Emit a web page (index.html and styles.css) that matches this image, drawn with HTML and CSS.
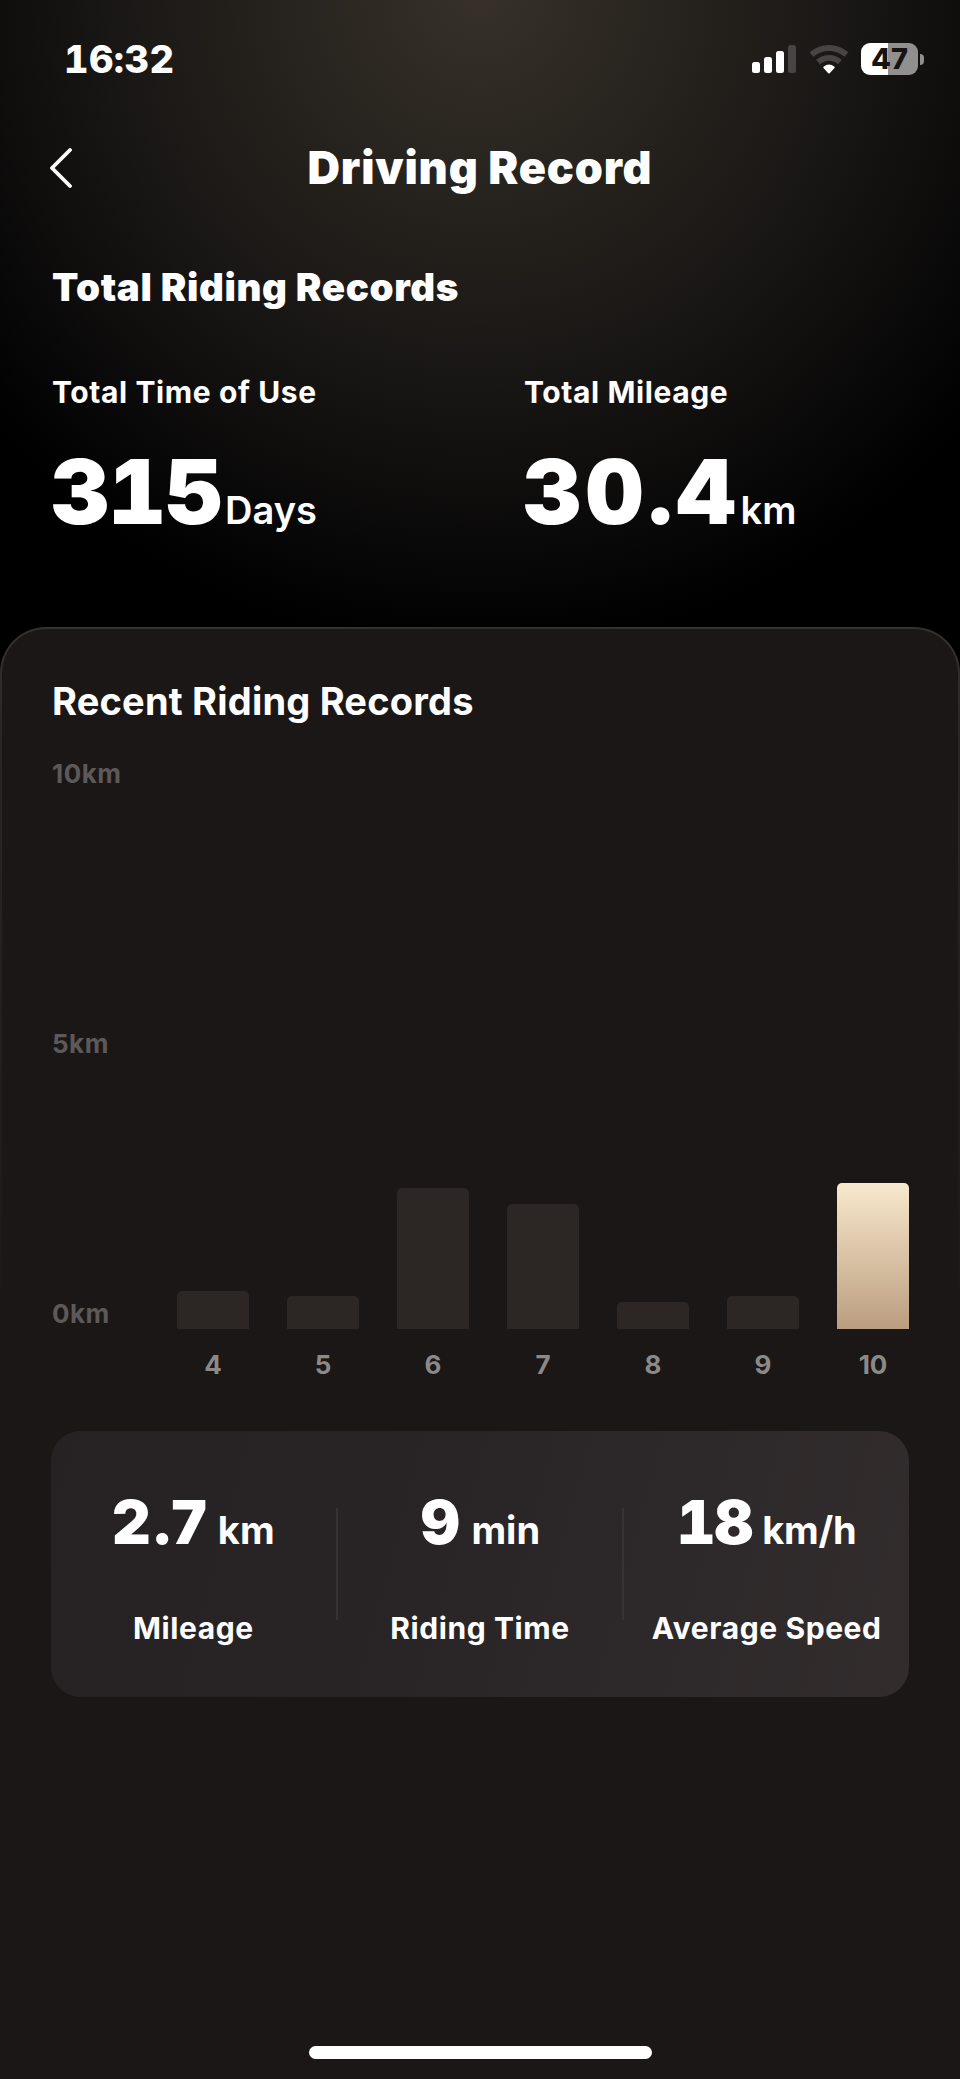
FILE: index.html
```html
<!DOCTYPE html>
<html lang="en">
<head>
<meta charset="utf-8">
<title>Driving Record</title>
<link rel="stylesheet" href="styles.css">
</head>
<body>
<div class="screen">
  <div class="status-bar">
    <span class="time">16:32</span>
    <div class="status-icons">
      <svg class="signal" width="44" height="28" viewBox="0 0 44 28">
        <rect x="0" y="17" width="8" height="11" rx="2.5" fill="#fff"/>
        <rect x="12" y="12" width="8" height="16" rx="2.5" fill="#fff"/>
        <rect x="24" y="6" width="8" height="22" rx="2.5" fill="#fff"/>
        <rect x="36" y="0" width="8" height="28" rx="2.5" fill="#474443"/>
      </svg>
      <svg class="wifi" width="40" height="29" viewBox="0 0 40 29">
        <path d="M2.500 9.6Q10.500 3 20 3T37.500 9.600" fill="none" stroke="#474443" stroke-width="5.8"/>
        <path d="M9 17Q14 12.800 20 12.800T31 17" fill="none" stroke="#474443" stroke-width="5.800"/>
        <path d="M14.500 21.700Q20 17.300 25.500 21.700Q26 22.300 25.500 22.900L20.700 28.200Q20 28.900 19.300 28.200L14.500 22.900Q14 22.300 14.500 21.700Z" fill="#fff"/>
      </svg>
      <div class="battery"><span class="battery-body">47</span><span class="battery-cap"></span></div>
    </div>
  </div>

  <header class="nav">
    <svg class="back" width="24" height="42" viewBox="0 0 24 42">
      <path d="M22 3L4 21L22 39" fill="none" stroke="#fff" stroke-width="3.800" stroke-linecap="round" stroke-linejoin="round"/>
    </svg>
    <h1 class="nav-title">Driving Record</h1>
  </header>

  <section class="totals">
    <h2 class="totals-title">Total Riding Records</h2>
    <div class="totals-grid">
      <div>
        <div class="label">Total Time of Use</div>
        <div class="total-value">315<span class="unit">Days</span></div>
      </div>
      <div>
        <div class="label">Total Mileage</div>
        <div class="total-value decimal">30.4<span class="unit">km</span></div>
      </div>
    </div>
  </section>

  <section class="panel">
    <h2 class="panel-title">Recent Riding Records</h2>
    <div class="chart">
      <div class="y-axis"><span>10km</span><span>5km</span><span>0km</span></div>
      <div class="bars">
        <div class="col"><div class="bar" style="height:38px"></div><span class="day">4</span></div>
        <div class="col"><div class="bar" style="height:33px"></div><span class="day">5</span></div>
        <div class="col"><div class="bar" style="height:141px"></div><span class="day">6</span></div>
        <div class="col"><div class="bar" style="height:125px"></div><span class="day">7</span></div>
        <div class="col"><div class="bar" style="height:27px"></div><span class="day">8</span></div>
        <div class="col"><div class="bar" style="height:33px"></div><span class="day">9</span></div>
        <div class="col"><div class="bar active" style="height:146px"></div><span class="day">10</span></div>
      </div>
    </div>
    <div class="summary">
      <div class="metric"><div class="metric-value">2.7<span class="unit">km</span></div><div class="label">Mileage</div></div>
      <div class="divider"></div>
      <div class="metric"><div class="metric-value">9<span class="unit">min</span></div><div class="label">Riding Time</div></div>
      <div class="divider"></div>
      <div class="metric"><div class="metric-value tabular">18<span class="unit">km/h</span></div><div class="label">Average Speed</div></div>
    </div>
    <div class="home-indicator"></div>
  </section>
</div>
</body>
</html>
```
FILE: styles.css
```css
* { box-sizing: border-box; }

body {
  margin: 0;
  background: #000;
  color: #fff;
  font-family: Inter, "Liberation Sans", sans-serif;
}

.screen {
  display: flex;
  flex-direction: column;
  width: 960px;
  height: 2079px;
  background: radial-gradient(ellipse 640px 660px at 480px -10px, #37312a 0%, #27231e 30%, #191715 58%, #0a0909 84%, #000 100%);
}

.status-bar {
  display: flex;
  justify-content: space-between;
  align-items: center;
  height: 118px;
  padding: 0 36px 0 64px;
}

.time {
  font-size: 38px;
  font-weight: 780;
  font-variant-numeric: tabular-nums;
  line-height: 46px;
  letter-spacing: 0.4px;
}

.status-icons { display: flex; align-items: center; }
.wifi { margin: 0 12px 0 13px; }
.battery { display: flex; align-items: center; }

.battery-body {
  width: 57px;
  height: 32px;
  border-radius: 9px;
  background: linear-gradient(90deg, #fff 27px, #92908e 27px);
  color: #161413;
  font-size: 29px;
  font-weight: 800;
  line-height: 32px;
  text-align: center;
}

.battery-cap {
  width: 4px;
  height: 11px;
  margin-left: 2px;
  border-radius: 0 5px 5px 0;
  background: #92908e;
}

.nav {
  display: grid;
  grid-template-columns: 48px 1fr 48px;
  align-items: center;
  height: 100px;
  padding: 0 48px;
}

.nav-title {
  margin: 0;
  font-size: 45px;
  font-weight: 900;
  line-height: 56px;
  letter-spacing: 0.8px;
  text-align: center;
}

.totals { height: 409px; padding: 45px 52px 0; }

.totals-title {
  margin: 0 0 61px;
  font-size: 38.5px;
  font-weight: 900;
  line-height: 48px;
  letter-spacing: 0.6px;
}

.totals-grid { display: grid; grid-template-columns: 472px 1fr; }

.label { font-size: 30px; font-weight: 650; line-height: 40px; letter-spacing: 0.6px; white-space: nowrap; }

.total-value {
  margin-top: 35px;
  margin-left: -1px;
  font-size: 90px;
  font-weight: 900;
  font-variant-numeric: tabular-nums;
  line-height: 90px;
  letter-spacing: -1px;
}

.total-value.decimal { letter-spacing: 4.6px; }

.unit { font-size: 38px; font-weight: 620; line-height: 1; letter-spacing: 0; }
.total-value .unit { margin-left: 3px; }
.total-value.decimal .unit { margin-left: 1px; }

.panel {
  display: flex;
  flex-direction: column;
  flex: 1;
  padding: 47px 50px 20px;
  border: 2px solid transparent;
  border-bottom: 0;
  border-radius: 46px 46px 0 0;
  background:
    linear-gradient(#1b1716, #1b1716) padding-box,
    linear-gradient(#353130 0, #2a2625 100px, #1b1716 760px) border-box;
}

.panel-title {
  margin: 0 0 31px;
  font-size: 38px;
  font-weight: 650;
  line-height: 50px;
  letter-spacing: 0.2px;
}

.chart {
  display: flex;
  justify-content: space-between;
  height: 638px;
}

.y-axis {
  display: flex;
  flex-direction: column;
  justify-content: space-between;
  height: 574px;
  color: #5d5958;
  font-size: 26px;
  font-weight: 650;
  line-height: 34px;
  letter-spacing: 0.5px;
}

.bars { display: flex; gap: 38px; margin-right: -1px; }

.col {
  display: flex;
  flex-direction: column;
  justify-content: flex-end;
  align-items: center;
}

.bar { width: 72px; border-radius: 5px 5px 0 0; background: #2c2725; }
.bar.active { background: linear-gradient(#f8e8cd, #bb9d80); }

.day {
  height: 66px;
  padding-top: 19px;
  color: #8d8987;
  font-size: 26px;
  font-weight: 650;
  line-height: 34px;
}

.summary {
  display: flex;
  align-items: center;
  height: 266px;
  margin: 36px -1px 0 -1px;
  border-radius: 30px;
  background: linear-gradient(105deg, #262223, #292526 45%, #322c2d);
}

.metric {
  display: flex;
  flex: 1 1 0;
  flex-direction: column;
  align-items: center;
  padding-top: 12px;
}

.metric-value {
  margin-bottom: 56px;
  font-size: 60px;
  font-weight: 900;
  line-height: 60px;
  white-space: nowrap;
}

.metric-value.tabular { font-variant-numeric: tabular-nums; letter-spacing: -1px; }
.metric-value .unit { margin-left: 11px; font-weight: 650; }
.metric-value.tabular .unit { margin-left: 10px; letter-spacing: -0.2px; }

.divider { width: 2px; height: 112px; background: #373233; }

.home-indicator {
  width: 343px;
  height: 13px;
  margin: auto auto 0;
  border-radius: 7px;
  background: #fff;
}
```
